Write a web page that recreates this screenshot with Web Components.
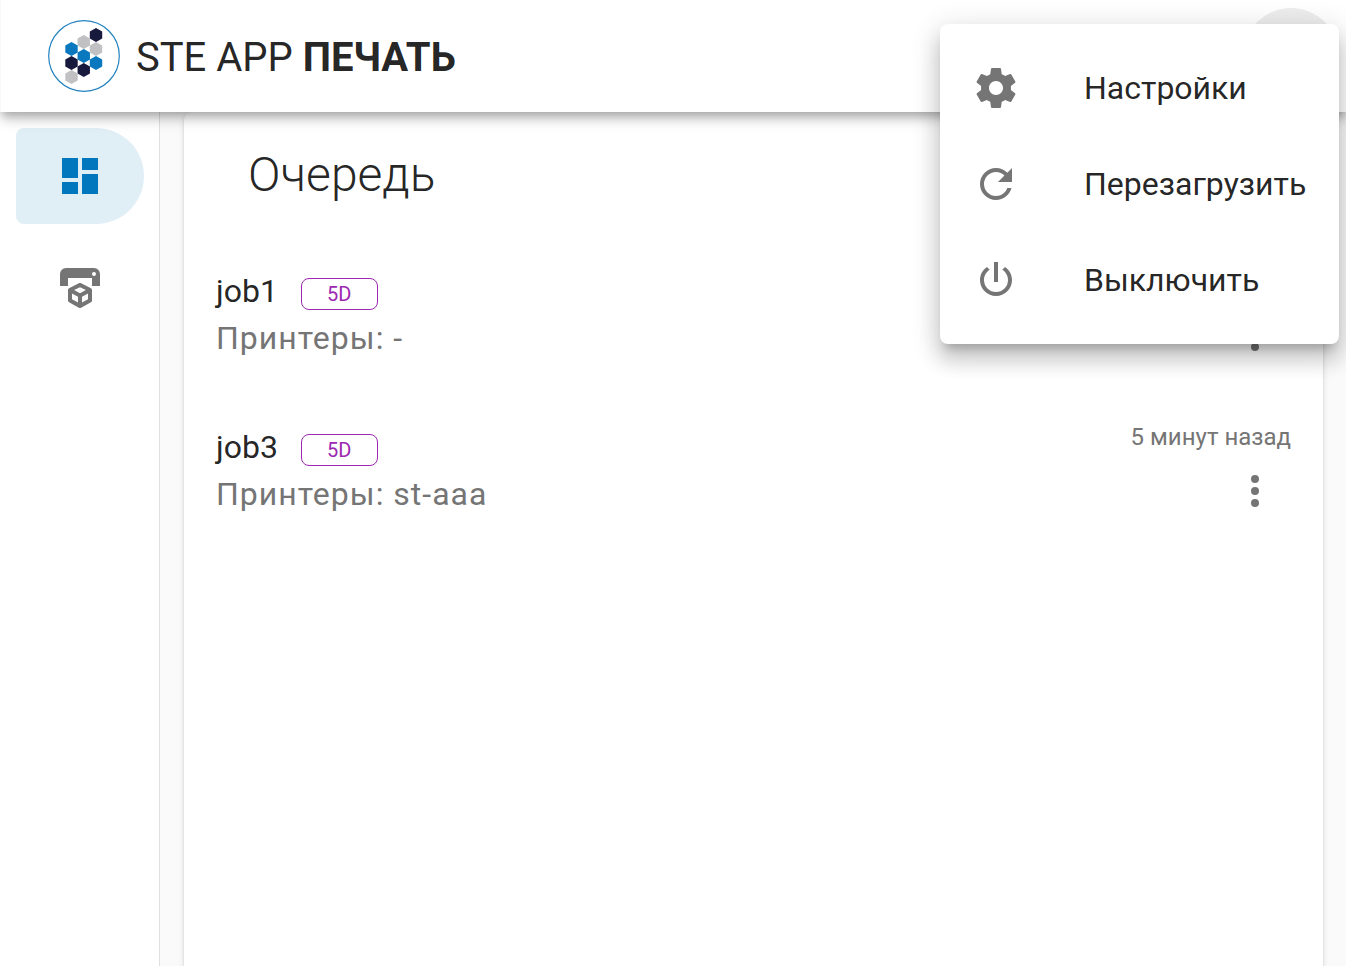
<!DOCTYPE html>
<html lang="ru">
<head>
<meta charset="utf-8">
<title>STE APP Печать</title>
<style>
html,body{margin:0;height:100%;overflow:hidden;background:#fff;font-family:Roboto,"Liberation Sans",sans-serif;color:rgba(0,0,0,.87)}
</style>
</head>
<body>
<ste-app></ste-app>
<script>
const ICONS = {
  cog: 'M19.43 12.98c.04-.32.07-.64.07-.98s-.03-.66-.07-.98l2.11-1.65c.19-.15.24-.42.12-.64l-2-3.46c-.12-.22-.39-.3-.61-.22l-2.49 1c-.52-.4-1.08-.73-1.69-.98l-.38-2.65C14.46 2.18 14.25 2 14 2h-4c-.25 0-.46.18-.49.42l-.38 2.65c-.61.25-1.17.59-1.69.98l-2.49-1c-.23-.09-.49 0-.61.22l-2 3.46c-.13.22-.07.49.12.64l2.11 1.65c-.04.32-.07.65-.07.98s.03.66.07.98l-2.11 1.65c-.19.15-.24.42-.12.64l2 3.46c.12.22.39.3.61.22l2.49-1c.52.4 1.08.73 1.69.98l.38 2.65c.03.24.24.42.49.42h4c.25 0 .46-.18.49-.42l.38-2.65c.61-.25 1.17-.59 1.69-.98l2.49 1c.23.09.49 0 .61-.22l2-3.46c.12-.22.07-.49-.12-.64l-2.11-1.65zM12 15.5c-1.93 0-3.5-1.57-3.5-3.5s1.57-3.5 3.5-3.5 3.5 1.57 3.5 3.5-1.57 3.5-3.5 3.5z',
  refresh: 'M17.65,6.35C16.2,4.9 14.21,4 12,4A8,8 0 0,0 4,12A8,8 0 0,0 12,20C15.73,20 18.84,17.45 19.73,14H17.65C16.83,16.33 14.61,18 12,18A6,6 0 0,1 6,12A6,6 0 0,1 12,6C13.66,6 15.14,6.69 16.22,7.78L13,11H20V4L17.65,6.35Z',
  power: 'M16.56,5.44L15.11,6.89C16.84,7.94 18,9.83 18,12A6,6 0 0,1 12,18A6,6 0 0,1 6,12C6,9.83 7.16,7.94 8.88,6.88L7.44,5.44C5.36,6.88 4,9.28 4,12A8,8 0 0,0 12,20A8,8 0 0,0 20,12C20,9.28 18.64,6.88 16.56,5.44M13,3H11V13H13',
  dashboard: 'M3 13h8V3H3v10zm0 8h8v-6H3v6zm10 0h8V11h-8v10zm0-18v6h8V3h-8z',
  printer: 'M19,6A1,1 0 0,0 20,5A1,1 0 0,0 19,4A1,1 0 0,0 18,5A1,1 0 0,0 19,6M19,2A3,3 0 0,1 22,5V11H18V7H6V11H2V5A3,3 0 0,1 5,2H19M18,18.25C18,18.63 17.79,18.96 17.47,19.13L12.57,21.82C12.4,21.94 12.21,22 12,22C11.79,22 11.59,21.94 11.43,21.82L6.53,19.13C6.21,18.96 6,18.63 6,18.25V13C6,12.62 6.21,12.29 6.53,12.12L11.43,9.68C11.59,9.56 11.79,9.5 12,9.5C12.21,9.5 12.4,9.56 12.57,9.68L17.47,12.12C17.79,12.29 18,12.62 18,13V18.25M12,11.65L9.04,13L12,14.6L14.96,13L12,11.65M8,17.66L11,19.29V16.33L8,14.71V17.66M16,17.66V14.71L13,16.33V19.29L16,17.66Z',
  dots: 'M12,16A2,2 0 0,1 14,18A2,2 0 0,1 12,20A2,2 0 0,1 10,18A2,2 0 0,1 12,16M12,10A2,2 0 0,1 14,12A2,2 0 0,1 12,14A2,2 0 0,1 10,12A2,2 0 0,1 12,10M12,4A2,2 0 0,1 14,6A2,2 0 0,1 12,8A2,2 0 0,1 10,6A2,2 0 0,1 12,4Z'
};
function define(name, render) {
  customElements.define(name, class extends HTMLElement {
    connectedCallback() {
      if (!this.shadowRoot) this.attachShadow({mode: 'open'}).innerHTML = render(this);
    }
  });
}
define('ste-icon', el => `<style>:host{display:block;width:48px;height:48px;flex:none}svg{display:block;width:100%;height:100%;fill:currentColor}</style>
<svg viewBox="0 0 24 24"><path d="${ICONS[el.getAttribute('name')]}"/></svg>`);

const HEXES = [[96,35,'#17193d'],[83.75,42,'#c1c1c3'],[96,49,'#c1c1c3'],[71.5,49,'#0a78be'],[83.75,56,'#0a78be'],[96,63,'#0a78be'],[71.5,63,'#17193d'],[83.75,70,'#17193d'],[71.5,77,'#c1c1c3']];
define('ste-logo', () => `<style>:host{display:block;width:72px;height:72px;flex:none}svg{display:block}</style>
<svg width="72" height="72" viewBox="48 20 72 72"><circle cx="84" cy="56" r="35.3" fill="#fff" stroke="#2382c0" stroke-width="1.2"/>
${HEXES.map(([x,y,c]) => `<path fill="${c}" d="M${x} ${y-7.1}l6.2 3.55v7.1l-6.2 3.55l-6.2-3.55v-7.1z"/>`).join('')}</svg>`);

define('ste-header', () => `<style>
:host{display:flex;align-items:center;box-sizing:border-box;height:112px;margin-left:1px;padding:0 7px 0 47px;background:#fff;position:relative;z-index:2;
box-shadow:-1px 0 0 #f9f9f9,0 4px 8px -2px rgba(0,0,0,.2),0 8px 10px 0 rgba(0,0,0,.14),0 2px 20px 0 rgba(0,0,0,.12)}
h1{margin:0 auto 0 16px;padding-top:4px;font-size:40px;line-height:48px;font-weight:400;white-space:pre}
b{font-weight:700;letter-spacing:-.1px}
.more{width:96px;height:96px;border-radius:50%;background:#ededed}
</style><ste-logo></ste-logo><h1>STE APP <b>ПЕЧАТЬ</b></h1><div class="more"></div>`);

define('ste-nav-item', el => `<style>
:host{display:flex;align-items:center;justify-content:center;height:96px;border-radius:8px 48px 48px 8px;color:#757575}
:host([active]){background:#e0eff6;color:#0277bd}
</style><ste-icon name="${el.getAttribute('icon')}"></ste-icon>`);

define('ste-nav', () => `<style>
:host{display:flex;flex-direction:column;gap:16px;box-sizing:border-box;width:160px;flex:none;padding:16px 15px 0 16px;border-right:1px solid #e0e0e0;background:#fff}
</style><slot></slot>`);

define('ste-job', el => `<style>
:host{display:flex;justify-content:space-between;height:156px;box-sizing:border-box;padding:0 32px}
.title{display:flex;align-items:center;height:48px;margin-top:16px;font-size:32px;line-height:48px}
.title span:first-child{width:61px}
.chip{box-sizing:border-box;width:76.5px;height:32px;margin:5px 0 0 24px;border:1.5px solid #9c27b0;border-radius:8px;color:#9c27b0;font-size:20px;line-height:31px;text-align:center}
.sub{font-size:32px;line-height:46px;letter-spacing:1px;color:#757575;white-space:pre}
.side{display:flex;flex-direction:column;align-items:flex-end;color:#757575}
time{height:32px;font-size:24px;line-height:32px;margin-top:14px;white-space:nowrap}
ste-icon{margin:14px 12px 0 0}
</style><div><div class="title"><span>${el.getAttribute('name')}</span><span class="chip">5D</span></div>
<div class="sub">Принтеры: ${el.getAttribute('printers')}</div></div>
<div class="side"><time>${el.getAttribute('time') || ''}</time><ste-icon name="dots"></ste-icon></div>`);

define('ste-card', () => `<style>
:host{display:block;box-sizing:border-box;background:#fff;border-radius:8px 8px 0 0;height:100%;
box-shadow:0 4px 2px -2px rgba(0,0,0,.2),0 2px 2px 0 rgba(0,0,0,.14),0 2px 6px 0 rgba(0,0,0,.12)}
h2{margin:0;padding:31px 64px 0;height:139px;box-sizing:border-box;font-size:48px;line-height:64px;font-weight:300}
</style><h2><slot name="title"></slot></h2><slot></slot>`);

define('ste-menu-item', el => `<style>
:host{display:flex;align-items:center;height:96px;padding:0 32px;font-size:32px;white-space:nowrap}
ste-icon{color:#757575;margin-right:64px}
</style><ste-icon name="${el.getAttribute('icon')}"></ste-icon><span><slot></slot></span>`);

define('ste-menu', () => `<style>
:host{display:block;position:absolute;z-index:5;left:940px;top:24px;width:399px;height:320px;box-sizing:border-box;padding:16px 0;background:#fff;border-radius:8px;
box-shadow:0 10px 10px -6px rgba(0,0,0,.2),0 16px 20px 2px rgba(0,0,0,.14),0 6px 28px 4px rgba(0,0,0,.12)}
</style><slot></slot>`);

define('ste-app', () => `<style>
:host{display:flex;flex-direction:column;height:966px;position:relative;overflow:hidden}
.body{display:flex;flex:1;min-height:0}
main{flex:1;background:#fafafa;padding:0 23px 0 24px}
</style>
<ste-header></ste-header>
<div class="body"><ste-nav><ste-nav-item icon="dashboard" active></ste-nav-item><ste-nav-item icon="printer"></ste-nav-item></ste-nav>
<main><ste-card><span slot="title">Очередь</span><ste-job name="job1" printers="-"></ste-job><ste-job name="job3" printers="st-aaa" time="5 минут назад"></ste-job></ste-card></main></div>
<ste-menu><ste-menu-item icon="cog">Настройки</ste-menu-item><ste-menu-item icon="refresh">Перезагрузить</ste-menu-item><ste-menu-item icon="power">Выключить</ste-menu-item></ste-menu>`);
</script>
</body>
</html>
